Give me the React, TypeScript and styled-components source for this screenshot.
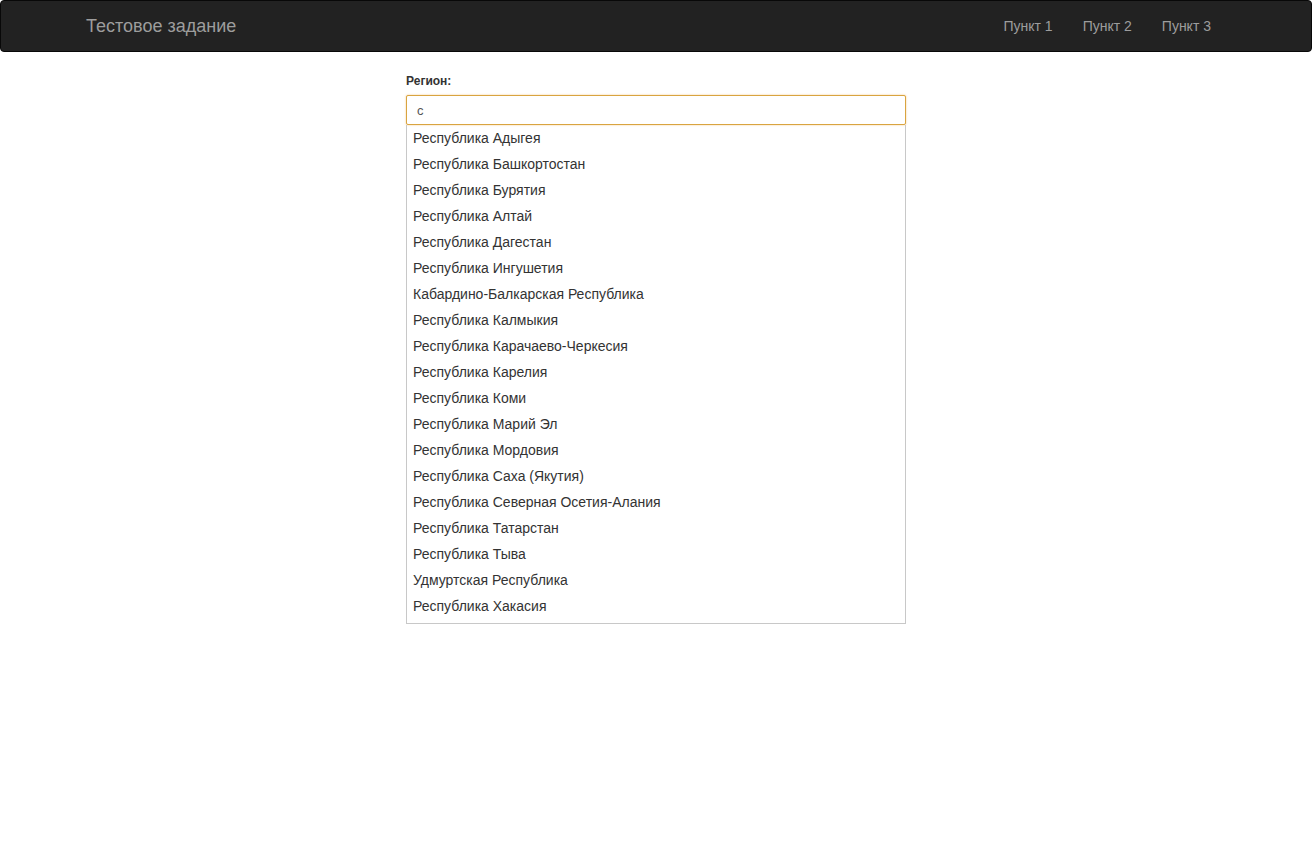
import React, { useState } from 'react';
import styled, { createGlobalStyle } from 'styled-components';

const GlobalStyle = createGlobalStyle`
  * { box-sizing: border-box; }
  body {
    margin: 0;
    font-family: "Liberation Sans", Arial, sans-serif;
    font-size: 14px;
    line-height: 1.42857;
    color: #333;
    background: #fff;
  }
`;

const Navbar = styled.nav`
  min-height: 50px;
  background-color: #222;
  border: 1px solid #080808;
  border-radius: 4px;
  margin-bottom: 20px;
`;

const NavContainer = styled.div`
  width: 1170px;
  margin: 0 auto;
  padding: 0 15px;
  display: flex;
  justify-content: space-between;
  align-items: center;
`;

const Brand = styled.a`
  display: block;
  height: 50px;
  padding: 15px 15px 15px 0;
  font-size: 18px;
  line-height: 20px;
  color: #9d9d9d;
  text-decoration: none;
`;

const NavList = styled.ul`
  display: flex;
  list-style: none;
  margin: 0;
  padding: 0;
`;

const NavLink = styled.a`
  display: block;
  padding: 15px;
  line-height: 20px;
  color: #9d9d9d;
  text-decoration: none;
`;

const Content = styled.div`
  width: 500px;
  margin: 0 auto;
  padding-top: 1px;
`;

const Label = styled.label`
  display: block;
  font-size: 12px;
  font-weight: bold;
  line-height: 17px;
  margin-bottom: 5px;
`;

const Input = styled.input`
  display: block;
  width: 100%;
  height: 30px;
  padding: 5px 10px;
  font-family: "Liberation Sans", Arial, sans-serif;
  font-size: 13px;
  color: #555;
  border: 1px solid #d9a440;
  border-radius: 2px;
  box-shadow: 0 0 2px rgba(240, 173, 78, 0.7);
  outline: none;
  caret-color: #333;
`;

const Suggestions = styled.ul`
  list-style: none;
  margin: 0;
  padding: 0 0 4px;
  border: 1px solid #c8c8c8;
  border-top: none;
`;

const Suggestion = styled.li`
  padding: 0 6px;
  height: 26px;
  line-height: 26px;
  font-size: 14px;
  color: #333;
  cursor: pointer;
`;

const REGIONS = [
  'Республика Адыгея',
  'Республика Башкортостан',
  'Республика Бурятия',
  'Республика Алтай',
  'Республика Дагестан',
  'Республика Ингушетия',
  'Кабардино-Балкарская Республика',
  'Республика Калмыкия',
  'Республика Карачаево-Черкесия',
  'Республика Карелия',
  'Республика Коми',
  'Республика Марий Эл',
  'Республика Мордовия',
  'Республика Саха (Якутия)',
  'Республика Северная Осетия-Алания',
  'Республика Татарстан',
  'Республика Тыва',
  'Удмуртская Республика',
  'Республика Хакасия',
];

export default function App() {
  const [query, setQuery] = useState('с');

  return (
    <>
      <GlobalStyle />
      <Navbar>
        <NavContainer>
          <Brand href="#">Тестовое задание</Brand>
          <NavList>
            <li><NavLink href="#">Пункт 1</NavLink></li>
            <li><NavLink href="#">Пункт 2</NavLink></li>
            <li><NavLink href="#">Пункт 3</NavLink></li>
          </NavList>
        </NavContainer>
      </Navbar>
      <Content>
        <Label htmlFor="region">Регион:</Label>
        <Input id="region" value={query} onChange={(e) => setQuery(e.target.value)} autoFocus />
        <Suggestions>
          {REGIONS.map((r) => (
            <Suggestion key={r}>{r}</Suggestion>
          ))}
        </Suggestions>
      </Content>
    </>
  );
}
